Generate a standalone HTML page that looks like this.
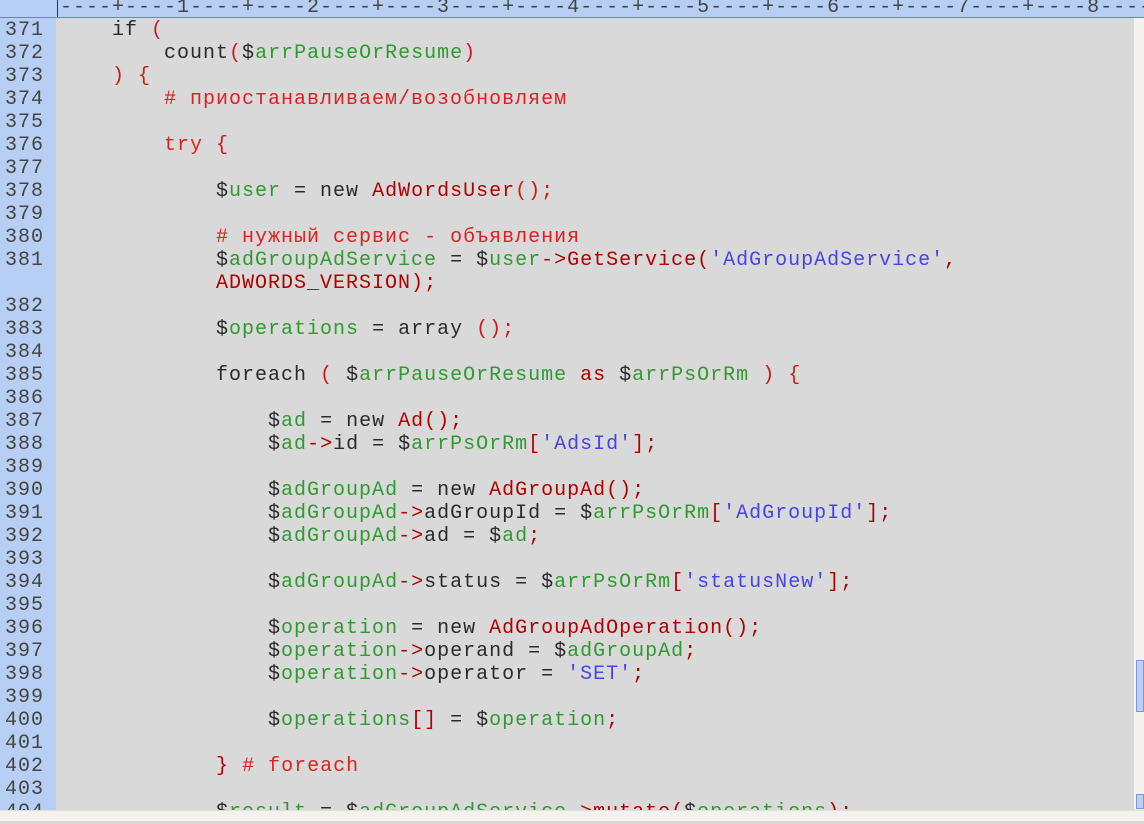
<!DOCTYPE html>
<html><head><meta charset="utf-8"><style>
html,body{margin:0;padding:0;width:1144px;height:820px;overflow:hidden;background:#d9d9d9}
.ruler{position:absolute;left:0;top:0;width:1144px;height:17px;background:#b7cff2;border-bottom:1px solid #6a86b8;overflow:hidden}
.ruler pre{position:absolute;left:60px;top:-4px;margin:0;font:20px/23px "Liberation Mono",monospace;letter-spacing:1px;color:#444;}
.rl{position:absolute;left:57px;top:0;width:1px;height:17px;background:#333}
.gut{position:absolute;left:0;top:18px;width:56px;height:792px;background:#b7cff2}
.gut pre{margin:0;padding-left:5px;font:20px/23px "Liberation Mono",monospace;letter-spacing:1px;color:#444;position:relative;top:1px}
.code{position:absolute;left:60px;top:19px;margin:0;font:20px/23px "Liberation Mono",monospace;letter-spacing:1px;color:#2a2a2a;white-space:pre}
.v{color:#2f9a2f}.r{color:#b00000}.c{color:#e02020}.s{color:#4444e8}.p{color:#d01818}
.vs{position:absolute;left:1134px;top:18px;width:10px;height:792px;background:#f3f2ec}
.thumb{position:absolute;left:1136px;top:660px;width:8px;height:52px;background:#bcd0f5;border:1px solid #7c98d0;box-sizing:border-box}
.dn{position:absolute;left:1136px;top:794px;width:8px;height:15px;background:#bcd0f5;border:1px solid #7c98d0;box-sizing:border-box}
.hs{position:absolute;left:0;top:810px;width:1144px;height:10px;background:#f3f2ec;border-top:1px solid #e0dfd8}
</style></head><body>
<pre class="code">    if <span class="p">(</span>
        count<span class="p">(</span>$<span class="v">arrPauseOrResume</span><span class="p">)</span>
    <span class="p">)</span> <span class="p">{</span>
        <span class="c"># приостанавливаем/возобновляем</span>

        <span class="c">try</span> <span class="p">{</span>

            $<span class="v">user</span> = new <span class="r">AdWordsUser</span><span class="p">();</span>

            <span class="c"># нужный сервис - объявления</span>
            $<span class="v">adGroupAdService</span> = $<span class="v">user</span><span class="r">-&gt;GetService(</span><span class="s">'AdGroupAdService'</span><span class="r">,</span>
            <span class="r">ADWORDS_VERSION);</span>

            $<span class="v">operations</span> = array <span class="p">();</span>

            foreach <span class="p">(</span> $<span class="v">arrPauseOrResume</span> <span class="r">as</span> $<span class="v">arrPsOrRm</span> <span class="p">) {</span>

                $<span class="v">ad</span> = new <span class="r">Ad();</span>
                $<span class="v">ad</span><span class="r">-&gt;</span>id = $<span class="v">arrPsOrRm</span><span class="r">[</span><span class="s">'AdsId'</span><span class="r">];</span>

                $<span class="v">adGroupAd</span> = new <span class="r">AdGroupAd();</span>
                $<span class="v">adGroupAd</span><span class="r">-&gt;</span>adGroupId = $<span class="v">arrPsOrRm</span><span class="r">[</span><span class="s">'AdGroupId'</span><span class="r">];</span>
                $<span class="v">adGroupAd</span><span class="r">-&gt;</span>ad = $<span class="v">ad</span><span class="r">;</span>

                $<span class="v">adGroupAd</span><span class="r">-&gt;</span>status = $<span class="v">arrPsOrRm</span><span class="r">[</span><span class="s">'statusNew'</span><span class="r">];</span>

                $<span class="v">operation</span> = new <span class="r">AdGroupAdOperation();</span>
                $<span class="v">operation</span><span class="r">-&gt;</span>operand = $<span class="v">adGroupAd</span><span class="r">;</span>
                $<span class="v">operation</span><span class="r">-&gt;</span>operator = <span class="s">'SET'</span><span class="r">;</span>

                $<span class="v">operations</span><span class="r">[]</span> = $<span class="v">operation</span><span class="r">;</span>

            <span class="r">}</span> <span class="c"># foreach</span>

            $<span class="v">result</span> = $<span class="v">adGroupAdService</span><span class="r">-&gt;mutate(</span>$<span class="v">operations</span><span class="r">);</span></pre>
<div class="gut"><pre>371
372
373
374
375
376
377
378
379
380
381

382
383
384
385
386
387
388
389
390
391
392
393
394
395
396
397
398
399
400
401
402
403
404</pre></div>
<div class="ruler"><div class="rl"></div><pre>----+----1----+----2----+----3----+----4----+----5----+----6----+----7----+----8----</pre></div>
<div class="vs"></div><div class="thumb"></div><div class="dn"></div>
<div class="hs"></div>
</body></html>
